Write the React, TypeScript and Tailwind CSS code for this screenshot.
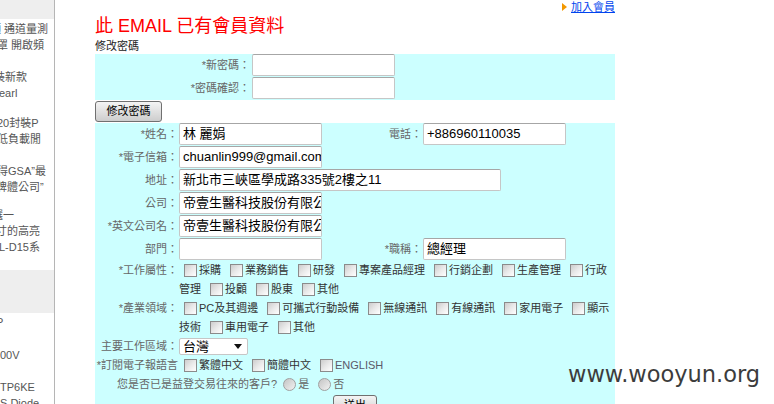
import React from 'react';

const field =
  'h-[22px] bg-white border border-[#c6c6c6] border-t-[#a6a6a6] rounded-[2px] pl-[3px] text-[13px] leading-[20px] text-black whitespace-nowrap overflow-hidden';

function Chk() {
  return (
    <span className="inline-block w-[13px] h-[13px] shrink-0 mr-[2px] border border-[#8b8b8b] bg-gradient-to-br from-[#cdcdcd] via-[#e9e9e9] to-white" />
  );
}

function Radio() {
  return (
    <span className="inline-block w-[13px] h-[13px] shrink-0 mr-[2px] rounded-full border border-[#a0a0a0] bg-gradient-to-br from-[#c4c4c4] to-[#f2f2f2]" />
  );
}

function Opts({ items }: { items: string[] }) {
  return (
    <>
      {items.map((t) => (
        <span key={t} className="flex items-center">
          <Chk />
          {t}
        </span>
      ))}
    </>
  );
}

export default function App() {
  return (
    <div className="relative w-[774px] h-[404px] overflow-hidden bg-white flex font-['Liberation_Sans','Noto_Sans_CJK_TC',sans-serif] text-[11px]">
      {/* sidebar, scrolled off to the left */}
      <div className="w-[55px] shrink-0 h-full border-r border-[#b5b5b5] overflow-hidden text-[#555] leading-[16px] whitespace-nowrap">
        <div className="h-[19px] bg-[#eeeeee]" />
        <div className="mt-[2px] ml-[-10px]">頻 通道量測</div>
        <div className="ml-[-3px]">罩 開啟頻</div>
        <div className="mt-[16px] ml-[-6px]">裝新款</div>
        <div className="ml-[-1px]">earl</div>
        <div className="mt-[14px] ml-[-3px]">20封裝P</div>
        <div className="ml-[-3px]">低負載閒</div>
        <div className="mt-[16px] ml-[-3px]">得GSA”最</div>
        <div className="ml-[-4px]">牌體公司”</div>
        <div className="mt-[12px] ml-[-8px]">選一</div>
        <div className="ml-[-4px]">寸的高亮</div>
        <div className="ml-[-1px]">L-D15系</div>
        <div className="mt-[15px] h-[43px] bg-[#eeeeee]" />
        <div className="mt-[1px] ml-[-4px]">P</div>
        <div className="mt-[17px]">00V</div>
        <div className="mt-[16px]">TP6KE</div>
        <div>S Diode</div>
      </div>

      <div className="ml-[40px] w-[520px] flex flex-col">
        <div className="h-[14px] flex justify-end items-center">
          <svg width="5" height="8" viewBox="0 0 5 8" className="mr-[4px]">
            <polygon points="0,0 5,4 0,8" fill="#f39800" />
          </svg>
          <span className="leading-[14px] text-[#0044ee] underline">加入會員</span>
        </div>
        <div className="h-[25px] leading-[25px] text-[18px] text-[#ff0000]">此 EMAIL 已有會員資料</div>
        <div className="h-[15px] leading-[15px] text-[#222]">修改密碼</div>

        <div className="h-[46px] bg-[#ccffff] text-[#666]">
          <div className="flex h-[23px]">
            <div className="w-[155px] text-right leading-[22px]">*新密碼：</div>
            <div className={`ml-[2px] w-[143px] ${field}`} />
          </div>
          <div className="flex h-[23px]">
            <div className="w-[155px] text-right leading-[22px]">*密碼確認：</div>
            <div className={`ml-[2px] w-[143px] ${field}`} />
          </div>
        </div>

        <button className="mt-[1px] w-[67px] h-[21px] border border-[#707070] rounded-[3px] bg-gradient-to-b from-[#f4f4f4] to-[#cdcdcd] text-[11px] text-black leading-[19px]">
          修改密碼
        </button>

        <div className="mt-[1px] flex-1 bg-[#ccffff] text-[#666]">
          <div className="flex h-[23px]">
            <div className="w-[83px] text-right leading-[22px]">*姓名：</div>
            <div className={`ml-[1px] w-[143px] ${field}`}>林 麗娟</div>
            <div className="w-[100px] text-right leading-[22px]">電話：</div>
            <div className={`ml-[1px] w-[143px] ${field}`}>+886960110035</div>
          </div>
          <div className="flex h-[23px]">
            <div className="w-[83px] text-right leading-[22px]">*電子信箱：</div>
            <div className={`ml-[1px] w-[143px] ${field}`}>chuanlin999@gmail.com</div>
          </div>
          <div className="flex h-[23px]">
            <div className="w-[83px] text-right leading-[22px]">地址：</div>
            <div className={`ml-[1px] w-[322px] ${field}`}>新北市三峽區學成路335號2樓之11</div>
          </div>
          <div className="flex h-[23px]">
            <div className="w-[83px] text-right leading-[22px]">公司：</div>
            <div className={`ml-[1px] w-[143px] ${field}`}>帝壹生醫科技股份有限公司</div>
          </div>
          <div className="flex h-[23px]">
            <div className="w-[83px] text-right leading-[22px]">*英文公司名：</div>
            <div className={`ml-[1px] w-[143px] ${field}`}>帝壹生醫科技股份有限公司</div>
          </div>
          <div className="flex h-[23px]">
            <div className="w-[83px] text-right leading-[22px]">部門：</div>
            <div className={`ml-[1px] w-[143px] ${field}`} />
            <div className="w-[100px] text-right leading-[22px]">*職稱：</div>
            <div className={`ml-[1px] w-[143px] ${field}`}>總經理</div>
          </div>

          <div className="flex">
            <div className="w-[83px] text-right leading-[19px]">*工作屬性：</div>
            <div className="flex flex-col text-[#333]">
              <div className="flex items-center h-[19px] pl-[6px] gap-[9px]">
                <Opts items={['採購', '業務銷售', '研發', '專案產品經理', '行銷企劃', '生產管理', '行政']} />
              </div>
              <div className="flex items-center h-[19px] pl-[1px] gap-[9px]">
                <span>管理</span>
                <Opts items={['投顧', '股東', '其他']} />
              </div>
            </div>
          </div>

          <div className="flex">
            <div className="w-[83px] text-right leading-[19px]">*產業領域：</div>
            <div className="flex flex-col text-[#333]">
              <div className="flex items-center h-[19px] pl-[6px] gap-[9px]">
                <Opts items={['PC及其週邊', '可攜式行動設備', '無線通訊', '有線通訊', '家用電子', '顯示']} />
              </div>
              <div className="flex items-center h-[19px] pl-[1px] gap-[9px]">
                <span>技術</span>
                <Opts items={['車用電子', '其他']} />
              </div>
            </div>
          </div>

          <div className="flex items-center h-[19px]">
            <div className="w-[83px] text-right">主要工作區域：</div>
            <div className="ml-[1px] w-[69px] h-[17px] bg-white border border-[#c6c6c6] rounded-[2px] flex items-center justify-between pl-[3px] pr-[5px] text-[13px] text-black">
              <span className="leading-[15px]">台灣</span>
              <svg width="8" height="5" viewBox="0 0 8 5">
                <polygon points="0,0 8,0 4,5" fill="#111" />
              </svg>
            </div>
          </div>

          <div className="flex items-center h-[19px]">
            <div className="w-[83px] text-right">*訂閱電子報語言</div>
            <div className="flex items-center pl-[6px] gap-[9px] text-[#333]">
              <Opts items={['繁體中文', '簡體中文']} />
              <span className="flex items-center text-[#5a5a6a]">
                <Chk />
                ENGLISH
              </span>
            </div>
          </div>

          <div className="flex items-center h-[18px] pl-[22px]">
            <span>您是否已是益登交易往來的客戶?</span>
            <span className="flex items-center ml-[6px]">
              <Radio />
              是
            </span>
            <span className="flex items-center ml-[9px]">
              <Radio />
              否
            </span>
          </div>

          <button className="mt-[2px] ml-[238px] w-[44px] h-[21px] border border-[#707070] rounded-[3px] bg-gradient-to-b from-[#f4f4f4] to-[#cdcdcd] text-[11px] text-black leading-[19px]">
            送出
          </button>
        </div>
      </div>

      <div className="absolute left-[568px] top-[363px] font-['DejaVu_Sans',sans-serif] text-[22.5px] leading-none text-[#3c3c3c]">
        www.wooyun.org
      </div>
    </div>
  );
}
